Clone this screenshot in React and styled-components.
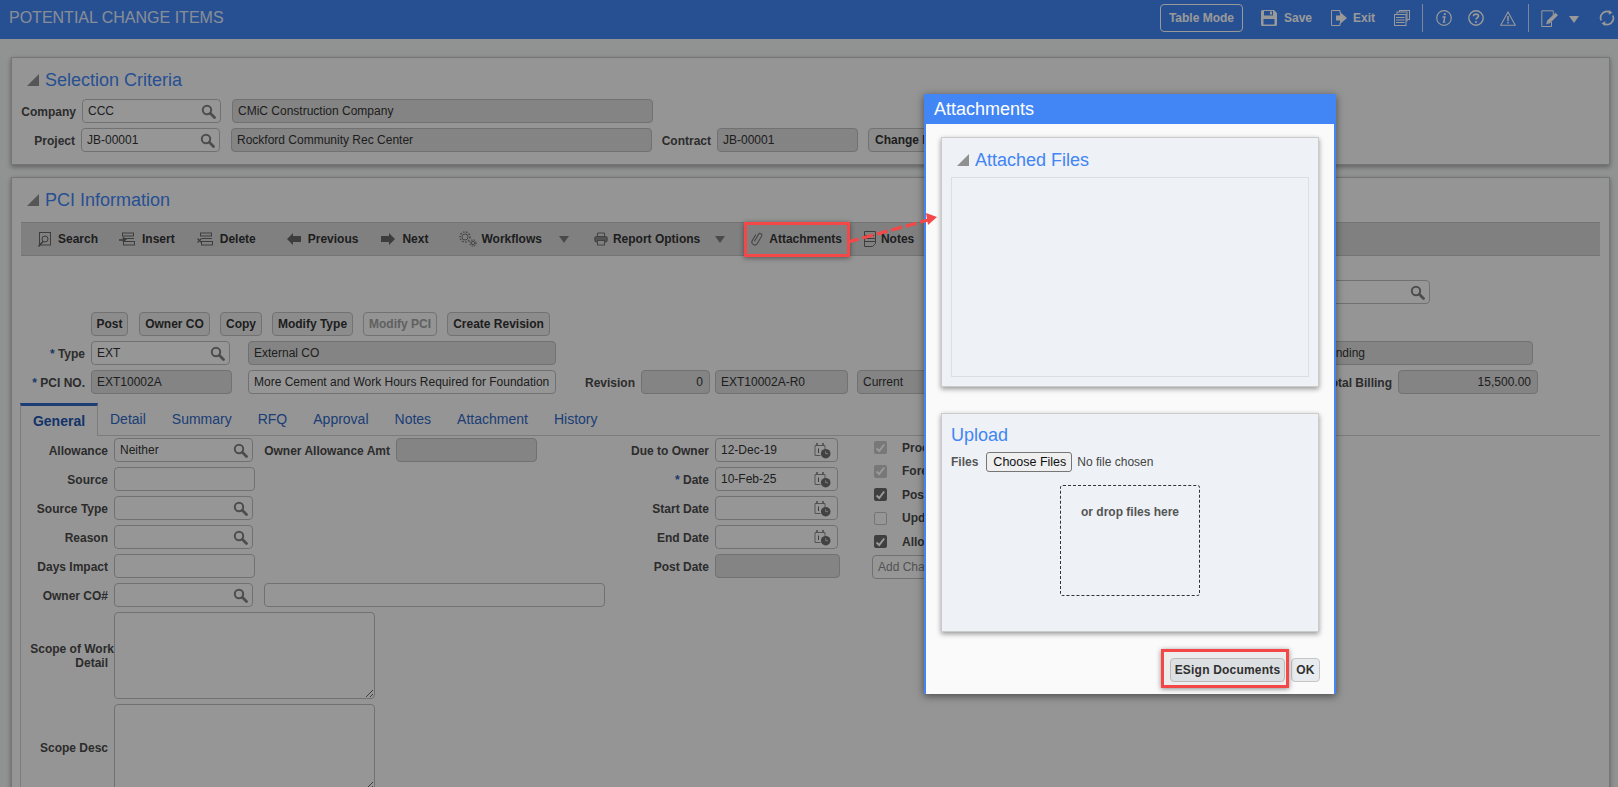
import React from 'react';
import styled, { createGlobalStyle } from 'styled-components';

const GlobalStyle = createGlobalStyle`
  html, body {
    margin: 0;
    height: 100%;
    overflow: hidden;
    background: #f2f5f3;
    font-family: "Liberation Sans", Arial, sans-serif;
    font-size: 12px;
    color: #333;
  }
  * { box-sizing: border-box; }
`;

const Page = styled.div`
  position: relative;
  width: 1618px;
  height: 787px;
  overflow: hidden;
`;

const TopBar = styled.header`
  height: 39px;
  background: #4285f4;
  display: flex;
  align-items: center;
  padding-left: 9px;
  color: #fff;
`;

const AppTitle = styled.h1`
  margin: -4px auto 0 0;
  font-size: 16px;
  font-weight: 400;
  color: #fff;
  opacity: 0.85;
`;

const ModeButton = styled.button`
  width: 83px;
  height: 28px;
  margin-top: -3px;
  background: transparent;
  border: 1px solid #fff;
  border-radius: 4px;
  color: #fff;
  font: bold 12px "Liberation Sans", Arial, sans-serif;
  padding: 0;
`;

const TopAction = styled.div`
  display: flex;
  align-items: center;
  gap: ${p => p.$gap ?? 7}px;
  margin-left: ${p => p.$ml}px;
  margin-right: ${p => p.$mr ?? 0}px;
  margin-top: -3px;
  font-weight: 700;
  font-size: 12px;
  color: #fff;
`;

const TopDivider = styled.div`
  width: 1px;
  height: 28px;
  margin-top: -3px;
  margin-left: ${p => p.$ml}px;
  background: rgba(255, 255, 255, 0.75);
`;

const Card = styled.section`
  margin: ${p => p.$mt}px 8px 0 11px;
  height: ${p => p.$h}px;
  background: #f9f9f9;
  border: 1px solid #c4c4c4;
  box-shadow: 0 2px 5px rgba(0, 0, 0, 0.35);
`;

const SectionHead = styled.div`
  display: flex;
  align-items: center;
  gap: 6px;
  height: ${p => p.$h}px;
  padding-left: ${p => p.$pl ?? 15}px;
  padding-top: ${p => p.$pt ?? 0}px;
`;

const SectionTitle = styled.h2`
  margin: 0;
  font-size: 18px;
  font-weight: 400;
  color: #4285f4;
`;

const Row = styled.div`
  display: flex;
  align-items: center;
  height: 24px;
  margin-top: ${p => p.$mt ?? 0}px;
`;

const Label = styled.label`
  flex: none;
  width: ${p => p.$w}px;
  padding: 2px 6px 0 0;
  text-align: right;
  font-size: 12px;
  font-weight: 700;
  color: #4a4a4a;
  white-space: nowrap;
`;

const Req = styled.span`
  color: #2f5fae;
`;

const Field = styled.div`
  flex: none;
  display: flex;
  align-items: center;
  justify-content: ${p => (p.$right ? 'flex-end' : 'space-between')};
  width: ${p => p.$w}px;
  height: 24px;
  margin-left: ${p => p.$ml ?? 0}px;
  margin-top: ${p => p.$mt ?? 0}px;
  padding: 0 ${p => (p.$right ? 6 : 4)}px 0 5px;
  background: ${p => (p.$off ? '#dcdcdc' : '#fbfbfb')};
  border: 1px solid #bdbdbd;
  border-radius: 4px;
  font-size: 12px;
  color: ${p => (p.$muted ? '#8a8a8a' : '#333')};
  white-space: nowrap;
  overflow: hidden;
`;

const SmallButton = styled.button`
  flex: none;
  height: 24px;
  width: ${p => p.$w}px;
  margin-left: ${p => p.$ml ?? 0}px;
  padding: 0 0 0 ${p => (p.$left ? 6 : 0)}px;
  background: ${p => (p.$off ? '#f7f7f7' : '#eaeaea')};
  border: 1px solid #bfbfbf;
  border-radius: 4px;
  font: bold 12px "Liberation Sans", Arial, sans-serif;
  color: ${p => (p.$off ? '#a0a0a0' : '#333')};
  white-space: nowrap;
  overflow: hidden;
  text-align: ${p => (p.$left ? 'left' : 'center')};
`;

const Toolbar = styled.div`
  display: flex;
  align-items: center;
  width: 1579px;
  height: 34px;
  margin-left: 9px;
  padding-left: 17px;
  background: #d6d6d6;
  border-top: 1px solid #c2c2c2;
  border-bottom: 1px solid #c2c2c2;
`;

const ToolItem = styled.div`
  display: flex;
  align-items: center;
  gap: ${p => p.$gap ?? 7}px;
  margin-left: ${p => p.$ml ?? 0}px;
  font-weight: 700;
  font-size: 12px;
  color: #333;
  white-space: nowrap;
`;

const Caret = styled.span`
  width: 0;
  height: 0;
  margin-left: ${p => p.$ml}px;
  border-left: 5px solid transparent;
  border-right: 5px solid transparent;
  border-top: 7px solid ${p => p.$color ?? '#7c7c7c'};
`;

const Tabs = styled.div`
  display: flex;
  align-items: stretch;
  height: 33px;
  margin: 9px 9px 0 8px;
  border-bottom: 1px solid #cfcfcf;
`;

const Tab = styled.div`
  display: flex;
  align-items: center;
  justify-content: center;
  margin-left: ${p => p.$ml ?? 0}px;
  width: ${p => (p.$active ? '78px' : 'auto')};
  height: ${p => (p.$active ? '33px' : 'auto')};
  font-size: 14px;
  font-weight: ${p => (p.$active ? 700 : 400)};
  color: ${p => (p.$active ? '#1e56b0' : '#2f67c4')};
  background: ${p => (p.$active ? '#f9f9f9' : 'transparent')};
  border-top: ${p => (p.$active ? '3px solid #2f67c4' : 'none')};
  border-left: ${p => (p.$active ? '1px solid #cfcfcf' : 'none')};
  border-right: ${p => (p.$active ? '1px solid #cfcfcf' : 'none')};
`;

const FormArea = styled.div`
  display: flex;
  margin-left: 8px;
  padding-top: 2px;
  border-left: 1px solid #cfcfcf;
  height: 352px;
`;

const FormColumn = styled.div`
  flex: none;
  width: ${p => p.$w}px;
  display: flex;
  flex-direction: column;
  gap: 5px;
`;

const AreaRow = styled.div`
  display: flex;
  align-items: center;
  height: 87px;
`;

const AreaLabel = styled.label`
  flex: none;
  width: 93px;
  padding-right: 6px;
  text-align: right;
  font-weight: 700;
  color: #4a4a4a;
  line-height: 14px;
`;

const AreaLine = styled.span`
  display: block;
  margin-right: -6px;
  white-space: nowrap;
`;

const AreaInput = styled.textarea`
  flex: none;
  width: 261px;
  height: 87px;
  margin: 0;
  background: #fbfbfb;
  border: 1px solid #bdbdbd;
  border-radius: 4px;
  outline: none;
`;

const CheckRow = styled.div`
  display: flex;
  align-items: center;
  height: 23.5px;
  gap: 15px;
  padding-left: 2px;
  font-weight: 700;
  color: #4a4a4a;
  white-space: nowrap;
`;

const Check = styled.span`
  flex: none;
  display: flex;
  align-items: center;
  justify-content: center;
  width: 13px;
  height: 13px;
  border-radius: 2px;
  background: ${p => (p.$state === 'on' ? '#6a6a6a' : p.$state === 'off' ? '#fbfbfb' : '#c8c8c8')};
  border: 1px solid ${p => (p.$state === 'off' ? '#c4c4c4' : 'transparent')};
`;

const Column3 = styled.div`
  flex: none;
  width: 300px;
  display: flex;
  flex-direction: column;
  margin-top: -2px;
`;

const Scrim = styled.div`
  position: absolute;
  inset: 0;
  background: rgba(0, 0, 0, 0.4);
`;

const Modal = styled.div`
  position: absolute;
  left: 924px;
  top: 94px;
  width: 412px;
  height: 600px;
  background: #fafafa;
  border: 2px solid #4286f5;
  border-top: none;
  border-bottom: none;
  box-shadow: 0 2px 8px rgba(0, 0, 0, 0.5);
`;

const ModalHead = styled.div`
  height: 30px;
  margin: 0 -2px;
  padding-left: 10px;
  display: flex;
  align-items: center;
  background: #4286f5;
  color: #fff;
  font-size: 18px;
  font-weight: 400;
`;

const Panel = styled.div`
  width: 378px;
  height: ${p => p.$h}px;
  margin: ${p => p.$mt}px 0 0 15px;
  background: #eef1f5;
  border: 1px solid #cbcbcb;
  box-shadow: 0 2px 5px rgba(0, 0, 0, 0.4);
`;

const FilesBox = styled.div`
  width: 358px;
  height: 200px;
  margin-left: 9px;
  border: 1px solid #d8dfe6;
`;

const UploadHead = styled.div`
  height: 38px;
  padding: 4px 0 0 9px;
  display: flex;
  align-items: center;
  font-size: 18px;
  color: #4285f4;
`;

const FilesRow = styled.div`
  display: flex;
  align-items: center;
  height: 20px;
  padding-left: 9px;
  gap: 8px;
  color: #555;
  font-weight: 700;
`;

const FileInput = styled.input`
  font: 12px "Liberation Sans", Arial, sans-serif;
  color: #444;
  &::file-selector-button {
    width: 86px;
    height: 20px;
    margin-right: 5px;
    font: 12.5px "Liberation Sans", Arial, sans-serif;
    color: #111;
    background: #efefef;
    border: 1px solid #767676;
    border-radius: 3px;
  }
`;

const DropZone = styled.div`
  width: 140px;
  height: 111px;
  margin: 13px 0 0 118px;
  padding-top: 19px;
  border: 1px dashed #333;
  border-radius: 3px;
  text-align: center;
  font-weight: 700;
  color: #555;
`;

const ModalFooter = styled.div`
  display: flex;
  justify-content: flex-end;
  gap: 6px;
  margin-top: 26px;
  margin-right: 14px;
`;

const FootButton = styled.button`
  height: 24px;
  width: ${p => p.$w}px;
  padding: 0;
  background: #e9ecef;
  border: 1px solid #c6c6c6;
  border-radius: 4px;
  font: bold 12px "Liberation Sans", Arial, sans-serif;
  color: #333;
  letter-spacing: 0.2px;
`;

const Highlight = styled.div`
  position: absolute;
  left: ${p => p.$x}px;
  top: ${p => p.$y}px;
  width: ${p => p.$w}px;
  height: ${p => p.$h}px;
  background: ${p => (p.$tint ? 'rgba(0, 0, 0, 0.05)' : 'transparent')};
  border: 3px solid #f44848;
  box-shadow: 0 1px 5px rgba(0, 0, 0, 0.45);
`;

const ArrowLayer = styled.svg`
  position: absolute;
  left: 840px;
  top: 205px;
`;

const IconSlot = styled.span`
  display: flex;
  margin-right: ${p => p.$mr ?? 0}px;
`;

const Mag = () => (
  <svg width="15" height="15" viewBox="0 0 15 15" fill="none" stroke="#808080">
    <circle cx="6" cy="6" r="4.2" strokeWidth="2" />
    <path d="M9.3 9.3l4.2 4.2" strokeWidth="2.8" strokeLinecap="round" />
  </svg>
);

const CalClock = () => (
  <IconSlot $mr={2}>
    <svg width="17" height="17" viewBox="0 0 17 17" fill="none">
      <path d="M1 3.5h10v4M1 3.5v10h5.5" stroke="#8c8c8c" strokeWidth="1" />
      <path d="M3 1v2.5M9 1v2.5" stroke="#777" strokeWidth="1.5" />
      <path d="M4.5 6.5v4.5" stroke="#666" strokeWidth="1" />
      <circle cx="11.7" cy="11.7" r="4.8" fill="#6e6e6e" />
      <path d="M11.7 9.3v2.4h2.4" stroke="#ddd" strokeWidth="0.9" />
    </svg>
  </IconSlot>
);

const Triangle = () => (
  <svg width="12" height="12" viewBox="0 0 12 12">
    <path d="M0 12L12 0v12z" fill="#909090" />
  </svg>
);

const SearchDoc = () => (
  <svg width="13" height="15" viewBox="0 0 13 15" fill="none" stroke="#666">
    <rect x="1.5" y="0.5" width="11" height="12.5" />
    <circle cx="7" cy="7" r="3" />
    <path d="M5 9.5L0.5 14.5" strokeWidth="1.6" />
  </svg>
);

const RowsIcon = ({ mark }) => (
  <svg width="16" height="14" viewBox="0 0 16 14" fill="none" stroke="#666">
    <rect x="3.5" y="1" width="11" height="3" />
    <rect x="4.5" y="9.5" width="11" height="3.5" />
    <path d="M5 6.5h10" />
    {mark === 'plus' ? (
      <path d="M0 7.5h4V5l3.5 2.5L4 10V8.5H0z" fill="#666" strokeWidth="0.6" />
    ) : (
      <path d="M0.5 6.5l4 4M4.5 6.5l-4 4" strokeWidth="1.2" />
    )}
  </svg>
);

const ArrowIcon = ({ flip }) => (
  <svg width="14" height="12" viewBox="0 0 14 12" style={flip ? { transform: 'scaleX(-1)' } : undefined}>
    <path d="M0 3h8V0l6 6-6 6V9H0z" fill="#666" />
  </svg>
);

const Gears = () => (
  <svg width="18" height="16" viewBox="0 0 18 16" fill="none" stroke="#777">
    <circle cx="6" cy="6" r="3" strokeWidth="1" />
    <circle cx="6" cy="6" r="5" strokeWidth="1.6" strokeDasharray="1.5 1.5" />
    <circle cx="14" cy="12" r="1.6" strokeWidth="1" />
    <circle cx="14" cy="12" r="3" strokeWidth="1.4" strokeDasharray="1.2 1.2" />
  </svg>
);

const Printer = () => (
  <svg width="14" height="14" viewBox="0 0 14 14" fill="none" stroke="#6e6e6e">
    <path d="M3.5 4V1h7v3" />
    <rect x="0.8" y="4.5" width="12.4" height="5.5" rx="1.5" fill="#8a8a8a" />
    <rect x="3.5" y="8.5" width="7" height="4.5" fill="#d6d6d6" />
  </svg>
);

const Clip = () => (
  <svg width="13" height="16" viewBox="0 0 13 16" fill="none" stroke="#777" strokeWidth="1.1">
    <path transform="rotate(30 6.5 8)" d="M5 11.5V3.5a1.8 1.8 0 0 1 3.6 0V12a2.9 2.9 0 0 1-5.8 0V5" />
  </svg>
);

const NoteIcon = () => (
  <svg width="13" height="16" viewBox="0 0 13 16" fill="none" stroke="#666">
    <path d="M1.5.5h11v12l-3 3h-8z" />
    <path d="M1 4.5h10M1 7.5h11M1 10.5h11" />
  </svg>
);

const SaveIcon = () => (
  <svg width="16" height="16" viewBox="0 0 16 16">
    <path d="M0 1.5A1.5 1.5 0 0 1 1.5 0H13l3 3v11.5a1.5 1.5 0 0 1-1.5 1.5h-13A1.5 1.5 0 0 1 0 14.5z" fill="#fff" />
    <rect x="3" y="1" width="9" height="4.5" fill="#4285f4" />
    <rect x="9" y="1.5" width="2" height="3" fill="#fff" />
    <rect x="2.5" y="9" width="11" height="5.5" fill="#4285f4" />
  </svg>
);

const ExitIcon = () => (
  <svg width="16" height="16" viewBox="0 0 16 16" fill="none">
    <path d="M9 3V.5H.5v15H9V13" stroke="#fff" />
    <path d="M5 5.5h4V2l7 6-7 6v-3.5H5z" fill="#fff" />
  </svg>
);

const StackIcon = () => (
  <svg width="16" height="16" viewBox="0 0 16 16" fill="none" stroke="#fff">
    <rect x="5.5" y="0.5" width="10" height="9" fill="#4285f4" />
    <rect x="3" y="2" width="10" height="9" fill="#4285f4" />
    <rect x="0.5" y="4.5" width="11.5" height="11" fill="#4285f4" />
    <path d="M2 7.5h8.5M2 10h8.5M2 12.5h8.5" />
  </svg>
);

const InfoIcon = () => (
  <svg width="16" height="16" viewBox="0 0 16 16" fill="none" stroke="#fff">
    <circle cx="8" cy="8" r="7.3" strokeWidth="1.2" />
    <circle cx="8.8" cy="4.2" r="1.1" fill="#fff" stroke="none" />
    <path d="M6.5 7h2.4L7.6 12h1.6" strokeWidth="1.4" />
  </svg>
);

const HelpIcon = () => (
  <svg width="16" height="16" viewBox="0 0 16 16" fill="none" stroke="#fff">
    <circle cx="8" cy="8" r="7.2" strokeWidth="1.4" />
    <path d="M5.5 6.2C5.6 3.4 10.5 3.4 10.5 6c0 1.8-2.5 1.8-2.5 3.6" strokeWidth="1.7" />
    <circle cx="8" cy="12" r="1.1" fill="#fff" stroke="none" />
  </svg>
);

const WarnIcon = () => (
  <svg width="16" height="15" viewBox="0 0 16 15" fill="none" stroke="#fff">
    <path d="M8 1l7.3 13.3H.7z" strokeWidth="1.1" />
    <path d="M8 5v5.2" strokeWidth="1.5" />
    <path d="M8 11v1.6" strokeWidth="1.5" />
  </svg>
);

const EditIcon = () => (
  <svg width="18" height="17" viewBox="0 0 18 17" fill="none" stroke="#fff">
    <path d="M10.5 12v4.5H.8V.8h11.5V6" strokeWidth="1" />
    <path d="M5.5 14l1-3.5L14.5 3l2.2 2.2L8.8 13z" fill="#fff" strokeWidth="0.5" />
  </svg>
);

const RefreshIcon = () => (
  <svg width="16" height="16" viewBox="0 0 16 16" fill="none" stroke="#fff" strokeWidth="1.7">
    <path d="M2.2 10.5A6.4 6.4 0 0 1 11 2.2" />
    <path d="M13.8 5.5A6.4 6.4 0 0 1 5 13.8" />
    <path d="M10 0l3.5 2.8-3.8 2z" fill="#fff" stroke="none" />
    <path d="M6 16l-3.5-2.8 3.8-2z" fill="#fff" stroke="none" />
  </svg>
);

const Tick = () => (
  <svg width="11" height="10" viewBox="0 0 11 10" fill="none" stroke="#fff" strokeWidth="2">
    <path d="M1.5 5.5L4.2 8l5-6.5" />
  </svg>
);

const tabs = [
  ['Detail', 12],
  ['Summary', 26],
  ['RFQ', 26],
  ['Approval', 26],
  ['Notes', 26],
  ['Attachment', 26],
  ['History', 26],
];

const checks = [
  ['Process', 'dim'],
  ['Forecast', 'dim'],
  ['Post', 'on'],
  ['Update', 'off'],
  ['Allow', 'on'],
];

const App = () => {
  return (
    <Page>
      <GlobalStyle />

      <TopBar>
        <AppTitle>POTENTIAL CHANGE ITEMS</AppTitle>
        <ModeButton>Table Mode</ModeButton>
        <TopAction $ml={18}><SaveIcon />Save</TopAction>
        <TopAction $ml={19} $gap={6}><ExitIcon />Exit</TopAction>
        <TopAction $ml={19}><StackIcon /></TopAction>
        <TopDivider $ml={12} />
        <TopAction $ml={13}><InfoIcon /></TopAction>
        <TopAction $ml={16}><HelpIcon /></TopAction>
        <TopAction $ml={16}><WarnIcon /></TopAction>
        <TopDivider $ml={12} />
        <TopAction $ml={12}><EditIcon /></TopAction>
        <Caret $ml={10} $color="#fff" />
        <TopAction $ml={20} $mr={3}><RefreshIcon /></TopAction>
      </TopBar>

      <Card $mt={18} $h={108}>
        <SectionHead $h={41} $pt={3}>
          <Triangle />
          <SectionTitle>Selection Criteria</SectionTitle>
        </SectionHead>
        <Row>
          <Label $w={70}>Company</Label>
          <Field $w={139}>CCC<Mag /></Field>
          <Field $w={421} $ml={11} $off>CMiC Construction Company</Field>
        </Row>
        <Row $mt={5}>
          <Label $w={69}>Project</Label>
          <Field $w={139}>JB-00001<Mag /></Field>
          <Field $w={421} $ml={11} $off>Rockford Community Rec Center</Field>
          <Label $w={65}>Contract</Label>
          <Field $w={141} $off>JB-00001</Field>
          <SmallButton $w={120} $ml={10} $left>Change Info</SmallButton>
        </Row>
      </Card>

      <Card $mt={12} $h={640}>
        <SectionHead $h={44}>
          <Triangle />
          <SectionTitle>PCI Information</SectionTitle>
        </SectionHead>
        <Toolbar>
          <ToolItem><SearchDoc />Search</ToolItem>
          <ToolItem $ml={21}><RowsIcon mark="plus" />Insert</ToolItem>
          <ToolItem $ml={22}><RowsIcon mark="x" />Delete</ToolItem>
          <ToolItem $ml={31}><ArrowIcon flip />Previous</ToolItem>
          <ToolItem $ml={23}><ArrowIcon />Next</ToolItem>
          <ToolItem $ml={31} $gap={4}><Gears />Workflows</ToolItem>
          <Caret $ml={17} />
          <ToolItem $ml={25} $gap={5}><Printer />Report Options</ToolItem>
          <Caret $ml={15} />
          <ToolItem $ml={26} $gap={5}><Clip />Attachments</ToolItem>
          <ToolItem $ml={21} $gap={5}><NoteIcon />Notes</ToolItem>
        </Toolbar>

        <Row $mt={24}>
          <Field $w={180} $ml={1238}><span /><Mag /></Field>
        </Row>

        <Row $mt={8}>
          <SmallButton $w={37} $ml={79}>Post</SmallButton>
          <SmallButton $w={71} $ml={11}>Owner CO</SmallButton>
          <SmallButton $w={42} $ml={10}>Copy</SmallButton>
          <SmallButton $w={81} $ml={10}>Modify Type</SmallButton>
          <SmallButton $w={74} $ml={10} $off>Modify PCI</SmallButton>
          <SmallButton $w={103} $ml={10}>Create Revision</SmallButton>
        </Row>

        <Row $mt={5}>
          <Label $w={79}><Req>*</Req> Type</Label>
          <Field $w={139}>EXT<Mag /></Field>
          <Field $w={308} $ml={18} $off>External CO</Field>
          <Field $w={218} $ml={759} $off>Pending</Field>
        </Row>
        <Row $mt={5}>
          <Label $w={79}><Req>*</Req> PCI NO.</Label>
          <Field $w={141} $off>EXT10002A</Field>
          <Field $w={308} $ml={16}>More Cement and Work Hours Required for Foundation</Field>
          <Label $w={85}>Revision</Label>
          <Field $w={69} $off $right>0</Field>
          <Field $w={133} $ml={5} $off>EXT10002A-R0</Field>
          <Field $w={120} $ml={9} $off>Current</Field>
          <Label $w={421}>Total Billing</Label>
          <Field $w={140} $off $right>15,500.00</Field>
        </Row>

        <Tabs>
          <Tab $active>General</Tab>
          {tabs.map(([name, ml]) => (
            <Tab key={name} $ml={ml}>{name}</Tab>
          ))}
        </Tabs>

        <FormArea>
          <FormColumn $w={590}>
            <Row>
              <Label $w={93}>Allowance</Label>
              <Field $w={139}>Neither<Mag /></Field>
              <Label $w={143}>Owner Allowance Amt</Label>
              <Field $w={141} $off />
            </Row>
            <Row>
              <Label $w={93}>Source</Label>
              <Field $w={141} />
            </Row>
            <Row>
              <Label $w={93}>Source Type</Label>
              <Field $w={139}><span /><Mag /></Field>
            </Row>
            <Row>
              <Label $w={93}>Reason</Label>
              <Field $w={139}><span /><Mag /></Field>
            </Row>
            <Row>
              <Label $w={93}>Days Impact</Label>
              <Field $w={141} />
            </Row>
            <Row>
              <Label $w={93}>Owner CO#</Label>
              <Field $w={139}><span /><Mag /></Field>
              <Field $w={341} $ml={11} />
            </Row>
            <AreaRow>
              <AreaLabel><AreaLine>Scope of Work</AreaLine>Detail</AreaLabel>
              <AreaInput />
            </AreaRow>
            <AreaRow>
              <AreaLabel>Scope Desc</AreaLabel>
              <AreaInput />
            </AreaRow>
          </FormColumn>

          <FormColumn $w={261}>
            <Row>
              <Label $w={104}>Due to Owner</Label>
              <Field $w={123}>12-Dec-19<CalClock /></Field>
            </Row>
            <Row>
              <Label $w={104}><Req>*</Req> Date</Label>
              <Field $w={123}>10-Feb-25<CalClock /></Field>
            </Row>
            <Row>
              <Label $w={104}>Start Date</Label>
              <Field $w={123}><span /><CalClock /></Field>
            </Row>
            <Row>
              <Label $w={104}>End Date</Label>
              <Field $w={123}><span /><CalClock /></Field>
            </Row>
            <Row>
              <Label $w={104}>Post Date</Label>
              <Field $w={125} $off />
            </Row>
          </FormColumn>

          <Column3>
            {checks.map(([name, state]) => (
              <CheckRow key={name}>
                <Check $state={state}>{state !== 'off' && <Tick />}</Check>
                {name}
              </CheckRow>
            ))}
            <Field $w={200} $mt={1} $muted>Add Change</Field>
          </Column3>
        </FormArea>
      </Card>

      <Scrim />
      <Highlight $x={744} $y={222} $w={106} $h={35} />

      <Modal>
        <ModalHead>Attachments</ModalHead>
        <Panel $mt={13} $h={250}>
          <SectionHead $h={39} $pt={5}>
            <Triangle />
            <SectionTitle>Attached Files</SectionTitle>
          </SectionHead>
          <FilesBox />
        </Panel>
        <Panel $mt={26} $h={219}>
          <UploadHead>Upload</UploadHead>
          <FilesRow>
            Files
            <FileInput type="file" multiple />
          </FilesRow>
          <DropZone>or drop files here</DropZone>
        </Panel>
        <ModalFooter>
          <FootButton $w={115}>ESign Documents</FootButton>
          <FootButton $w={29}>OK</FootButton>
        </ModalFooter>
      </Modal>

      <Highlight $x={1161} $y={649} $w={128} $h={39} $tint />
      <ArrowLayer width="110" height="50" viewBox="0 0 110 50">
        <path d="M8 37L88 15" stroke="#f44848" strokeWidth="3.2" strokeDasharray="11 4" fill="none" />
        <path d="M97 12L86 8l2 12z" fill="#f44848" />
      </ArrowLayer>
    </Page>
  );
};

export default App;
